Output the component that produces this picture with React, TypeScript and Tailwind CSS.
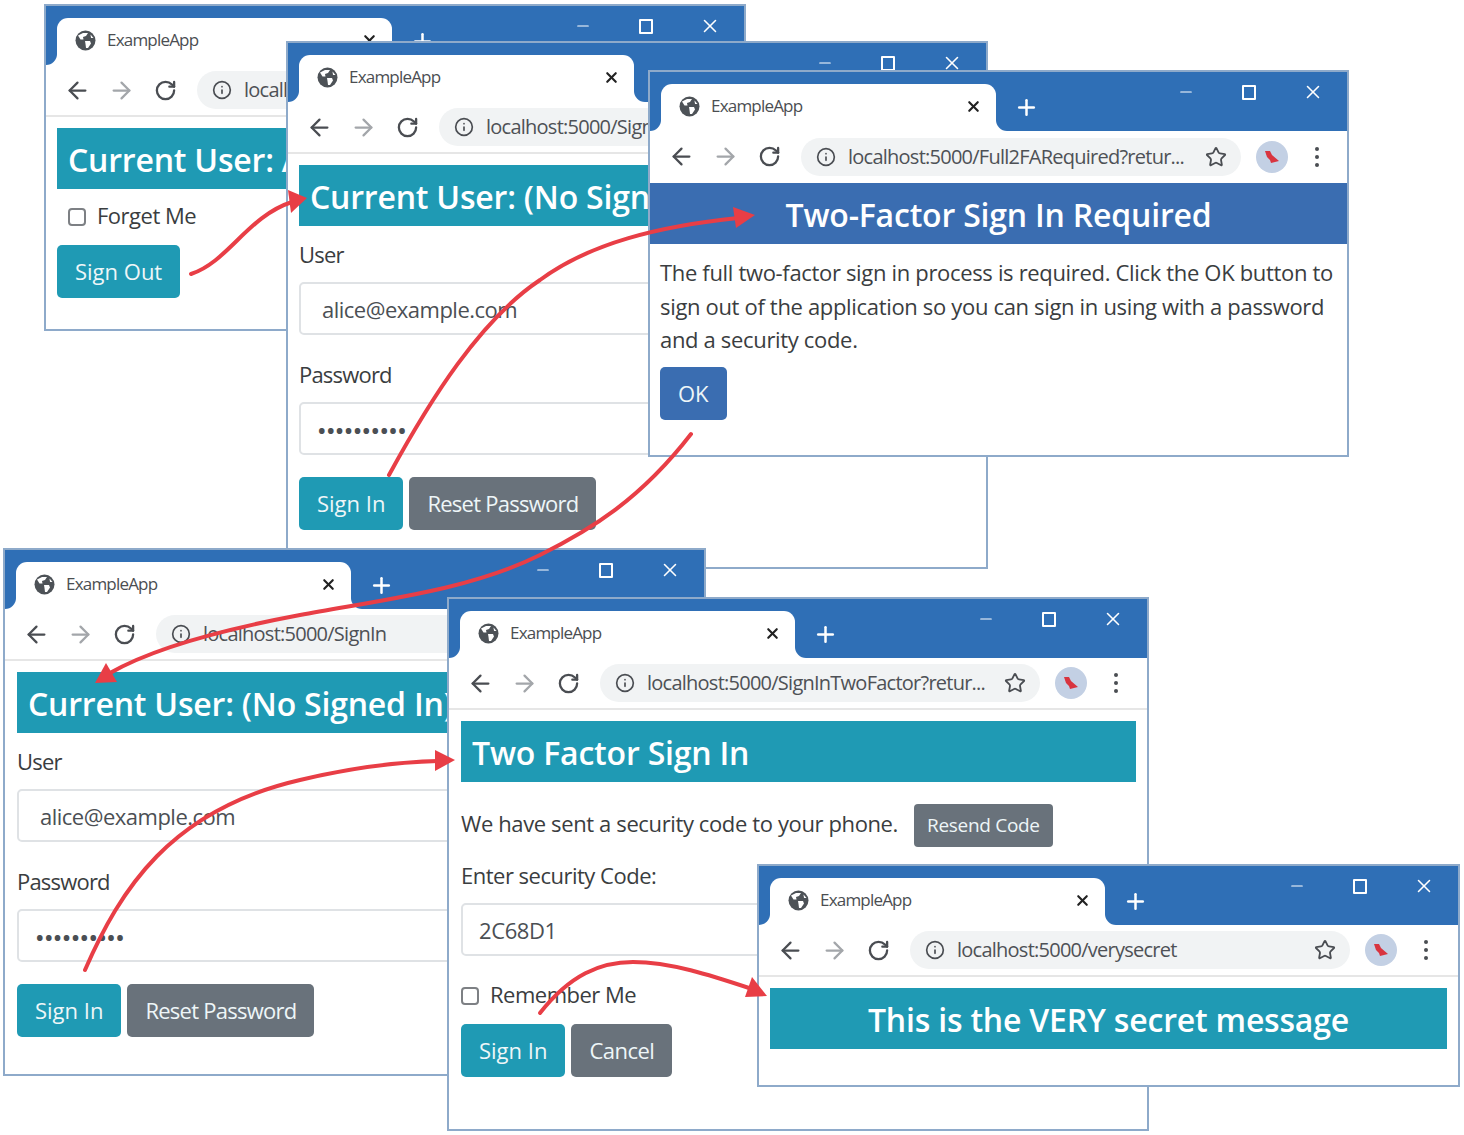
import { type ReactNode } from 'react'
import { ArrowLeft, ArrowRight, Info, Minus, Plus, RotateCw, Star, X } from 'lucide-react'

function GlobeIcon() {
  return (
    <svg width="21" height="21" viewBox="0 0 21 21" className="shrink-0">
      <circle cx="10.5" cy="10.5" r="10" fill="#4d5257" />
      <path d="M3 5.5 L8 3 L13 3 L11 6 L8 7 L8.5 9.5 L5.5 9.5 Z" fill="#fff" />
      <path d="M10 11 L15 11 L16 13.5 L13 18 L11 18 L10.5 14 Z" fill="#fff" />
      <path d="M15.5 4.5 L18.5 8 L16 8 Z" fill="#fff" />
    </svg>
  )
}

function Avatar() {
  return (
    <div className="flex h-[32px] w-[32px] items-center justify-center rounded-full bg-[#c3d0e4]">
      <svg width="20" height="18" viewBox="0 0 20 18">
        <path d="M3 3 L8 3 L10 7 L17 13 L13 14 L9 15 L8 12 L5 9 Z" fill="#d8343f" />
      </svg>
    </div>
  )
}

function Toolbar({ url, tall }: { url: string; tall: boolean }) {
  return (
    <div className={`flex items-center bg-white pl-[18px] ${tall ? 'h-[51px]' : 'h-[50px]'}`}>
      <ArrowLeft size={27} strokeWidth={2} className="shrink-0 text-[#4a4d52]" />
      <ArrowRight size={27} strokeWidth={2} className="ml-[17px] shrink-0 text-[#a3a6aa]" />
      <RotateCw size={23} strokeWidth={2.4} className="ml-[19px] shrink-0 text-[#4a4d52]" />
      <div className="ml-[20px] flex h-[38px] w-[440px] shrink-0 items-center rounded-full bg-[#f1f3f4] pl-[15px] pr-[14px]">
        <Info size={20} strokeWidth={2} className="shrink-0 text-[#4a4d52]" />
        <span className="ml-[12px] whitespace-nowrap text-[20px] tracking-[-0.75px] text-[#4e5156]">{url}</span>
        <Star size={22} strokeWidth={2} className="ml-auto shrink-0 text-[#4a4d52]" />
      </div>
      <div className="ml-[15px] shrink-0"><Avatar /></div>
      <div className="ml-[27px] flex shrink-0 flex-col gap-[4px]">
        <span className="h-[4px] w-[4px] rounded-full bg-[#4a4d52]" />
        <span className="h-[4px] w-[4px] rounded-full bg-[#4a4d52]" />
        <span className="h-[4px] w-[4px] rounded-full bg-[#4a4d52]" />
      </div>
    </div>
  )
}

interface BrowserWindowProps {
  url: string
  children: ReactNode
  className: string
  body?: string
  rule?: boolean
}

function BrowserWindow({ url, children, className, body = 'px-[11px]', rule = true }: BrowserWindowProps) {
  return (
    <div className={`absolute overflow-hidden border-2 border-[#8eaaca] bg-white ${className}`}>
      <div className="flex h-[59px] bg-[#2f6fb6]">
        <div className="flex w-[11px] shrink-0 flex-col justify-end">
          <div className="h-[11px] bg-white">
            <div className="h-full rounded-br-[11px] bg-[#2f6fb6]" />
          </div>
        </div>
        <div className="mt-[12px] flex h-[47px] w-[335px] shrink-0 items-center rounded-t-[11px] bg-white pb-[3px] pl-[18px] pr-[14px]">
          <GlobeIcon />
          <span className="ml-[11px] text-[17px] tracking-[-0.8px] text-[#4b4e52]">ExampleApp</span>
          <X size={17} strokeWidth={3} className="ml-auto text-[#222]" />
        </div>
        <div className="flex w-[11px] shrink-0 flex-col justify-end">
          <div className="h-[11px] bg-white">
            <div className="h-full rounded-bl-[11px] bg-[#2f6fb6]" />
          </div>
        </div>
        <Plus size={25} strokeWidth={2.4} className="ml-[7px] mt-[23px] shrink-0 text-white" />
        <div className="ml-auto flex h-[40px] w-[173px] shrink-0 items-center text-white">
          <Minus size={18} strokeWidth={1.6} className="ml-[3px]" />
          <div className="ml-[47px] h-[15px] w-[14px] rounded-[1px] border-2 border-white" />
          <X size={22} strokeWidth={1.7} className="ml-[46px]" />
        </div>
      </div>
      <Toolbar url={url} tall={!rule} />
      {rule ? <div className="h-[13px] border-t-2 border-[#e6e6e6]" /> : <div className="h-px bg-white" />}
      <div className={body}>{children}</div>
    </div>
  )
}

function Banner({ text, center, blue }: { text: string; center?: boolean; blue?: boolean }) {
  return (
    <div className={`flex h-[61px] items-center whitespace-nowrap px-[11px] pt-[3px] text-[32px] font-semibold tracking-[-0.2px] text-white ${blue ? 'bg-[#3a6db1]' : 'bg-[#1f9ab4]'} ${center ? 'justify-center' : ''}`}>
      {text}
    </div>
  )
}

function Btn({ label, tone, type = 'px-[18px] tracking-[0px]' }: { label: string; tone: 'teal' | 'gray' | 'blue'; type?: string }) {
  const colors = tone === 'teal' ? 'bg-[#1f9ab4]' : tone === 'gray' ? 'bg-[#69727b]' : 'bg-[#3a6db1]'
  return (
    <div className={`flex h-[53px] items-center rounded-[5px] text-[22px] text-[#eef6f8] ${colors} ${type}`}>
      {label}
    </div>
  )
}

function Check({ label }: { label: string }) {
  return (
    <div className="flex items-center text-[22px] tracking-[-0.5px] text-[#3a3d40]">
      <span className="h-[18px] w-[18px] rounded-[4px] border-2 border-[#7d8084] bg-white" />
      <span className="ml-[11px] -translate-y-[1px]">{label}</span>
    </div>
  )
}

function Field({ value, dots }: { value: string; dots?: boolean }) {
  return (
    <div className={`mt-[13px] flex h-[53px] items-center rounded-[5px] border-2 border-[#dfe2e5] text-[#4b4f54] ${dots ? 'pl-[17px] pt-[5px] text-[20px] font-bold tracking-[1.4px]' : 'pl-[21px] pt-[2px] text-[22px] tracking-[-0.5px]'}`}>
      {value}
    </div>
  )
}

function SignInForm() {
  return (
    <>
      <Banner text="Current User: (No Signed In)" />
      <div className="mt-[13px] text-[22px] leading-[30px] tracking-[-0.8px] text-[#3a3d40]">User</div>
      <Field value="alice@example.com" />
      <div className="mt-[24px] text-[22px] leading-[30px] tracking-[-0.8px] text-[#3a3d40]">Password</div>
      <Field value="••••••••••" dots />
      <div className="mt-[22px] flex gap-[6px]">
        <Btn label="Sign In" tone="teal" />
        <Btn label="Reset Password" tone="gray" type="px-[18px] tracking-[-0.75px]" />
      </div>
    </>
  )
}

function Arrow({ d, head }: { d: string; head: string }) {
  return (
    <>
      <path d={d} fill="none" stroke="#e83e46" strokeWidth="4" strokeLinecap="round" />
      <polygon points={head} fill="#e83e46" />
    </>
  )
}

export default function App() {
  return (
    <div className="relative h-[1135px] w-[1464px] overflow-hidden bg-white font-['Open_Sans',sans-serif]">
      <BrowserWindow url="localhost:5000/" className="left-[44px] top-[4px] h-[327px] w-[702px]">
        <Banner text="Current User: Alice" />
        <div className="mt-[11px] pl-[11px]"><Check label="Forget Me" /></div>
        <div className="mt-[12px] flex"><Btn label="Sign Out" tone="teal" /></div>
      </BrowserWindow>

      <BrowserWindow url="localhost:5000/SignIn" className="left-[286px] top-[41px] h-[528px] w-[702px]">
        <SignInForm />
      </BrowserWindow>

      <BrowserWindow url="localhost:5000/Full2FARequired?retur..." rule={false} body="" className="left-[648px] top-[70px] h-[387px] w-[701px]">
        <Banner text="Two-Factor Sign In Required" center blue />
        <div className="px-[10px]">
          <p className="mt-[12px] text-[22px] leading-[33.5px] tracking-[-0.33px] text-[#3a3d40]">
            The full two-factor sign in process is required. Click the OK button to sign out of the application so you can sign in using with a password and a security code.
          </p>
          <div className="mt-[10px] flex"><Btn label="OK" tone="blue" /></div>
        </div>
      </BrowserWindow>

      <BrowserWindow url="localhost:5000/SignIn" body="pl-[12px] pr-[11px]" className="left-[3px] top-[548px] h-[528px] w-[703px]">
        <SignInForm />
      </BrowserWindow>

      <BrowserWindow url="localhost:5000/SignInTwoFactor?retur..." body="pl-[12px] pr-[11px]" className="left-[447px] top-[597px] h-[534px] w-[702px]">
        <Banner text="Two Factor Sign In" />
        <div className="mt-[22px] flex items-center text-[22px] tracking-[-0.38px] text-[#3a3d40]">
          <span className="mb-[4px]">We have sent a security code to your phone.</span>
          <div className="ml-[16px] flex h-[43px] items-center rounded-[4px] bg-[#69727b] px-[13px] text-[19px] tracking-[-0.3px] text-[#eef6f8]">Resend Code</div>
        </div>
        <div className="mt-[13px] text-[22px] leading-[30px] tracking-[-0.5px] text-[#3a3d40]">Enter security Code:</div>
        <div className="mt-[13px] flex h-[53px] items-center rounded-[5px] border-2 border-[#dfe2e5] pl-[16px] pt-[2px] text-[22px] tracking-[-0.4px] text-[#4b4f54]">2C68D1</div>
        <div className="mt-[23px]"><Check label="Remember Me" /></div>
        <div className="mt-[12px] flex gap-[6px]">
          <Btn label="Sign In" tone="teal" />
          <Btn label="Cancel" tone="gray" type="px-[18px] tracking-[-0.5px]" />
        </div>
      </BrowserWindow>

      <BrowserWindow url="localhost:5000/verysecret" className="left-[757px] top-[864px] h-[223px] w-[703px]">
        <Banner text="This is the VERY secret message" center />
      </BrowserWindow>

      <svg className="absolute left-0 top-0" width="1464" height="1135" viewBox="0 0 1464 1135">
        <Arrow d="M191 274 C 228 262, 248 216, 292 202" head="307,198 288,190 291,213" />
        <Arrow d="M389 475 C 430 400, 480 320, 540 280 C 590 243, 660 226, 738 218" head="755,215 733,207 736,228" />
        <Arrow d="M691 434 C 640 500, 590 530, 540 555 C 470 590, 380 600, 300 615 C 220 630, 150 650, 110 673" head="95,683 117,682 106,663" />
        <Arrow d="M85 970 C 120 890, 170 810, 300 780 C 350 768, 400 762, 438 761" head="455,760 435,750 435,771" />
        <Arrow d="M540 1013 C 570 975, 600 962, 633 962 C 670 962, 710 975, 752 989" head="767,996 752,977 745,997" />
      </svg>
    </div>
  )
}
